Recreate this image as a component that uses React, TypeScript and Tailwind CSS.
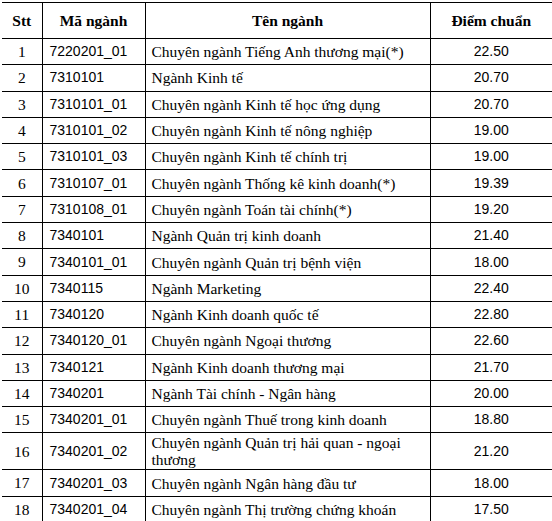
const rows: [string, string, string, string][] = [
  ['1', '7220201_01', 'Chuyên ngành Tiếng Anh thương mại(*)', '22.50'],
  ['2', '7310101', 'Ngành Kinh tế', '20.70'],
  ['3', '7310101_01', 'Chuyên ngành Kinh tế học ứng dụng', '20.70'],
  ['4', '7310101_02', 'Chuyên ngành Kinh tế nông nghiệp', '19.00'],
  ['5', '7310101_03', 'Chuyên ngành Kinh tế chính trị', '19.00'],
  ['6', '7310107_01', 'Chuyên ngành Thống kê kinh doanh(*)', '19.39'],
  ['7', '7310108_01', 'Chuyên ngành Toán tài chính(*)', '19.20'],
  ['8', '7340101', 'Ngành Quản trị kinh doanh', '21.40'],
  ['9', '7340101_01', 'Chuyên ngành Quản trị bệnh viện', '18.00'],
  ['10', '7340115', 'Ngành Marketing', '22.40'],
  ['11', '7340120', 'Ngành Kinh doanh quốc tế', '22.80'],
  ['12', '7340120_01', 'Chuyên ngành Ngoại thương', '22.60'],
  ['13', '7340121', 'Ngành Kinh doanh thương mại', '21.70'],
  ['14', '7340201', 'Ngành Tài chính - Ngân hàng', '20.00'],
  ['15', '7340201_01', 'Chuyên ngành Thuế trong kinh doanh', '18.80'],
  ['16', '7340201_02', 'Chuyên ngành Quản trị hải quan - ngoại thương', '21.20'],
  ['17', '7340201_03', 'Chuyên ngành Ngân hàng đầu tư', '18.00'],
  ['18', '7340201_04', 'Chuyên ngành Thị trường chứng khoán', '17.50'],
];

const serif = "font-['Liberation_Serif','Times_New_Roman',serif]";
const sans = "font-['Liberation_Sans',Arial,sans-serif]";

export default function App() {
  return (
    <div className="w-[552px] h-[521px] overflow-hidden bg-white text-black">
      <table className="ml-[2px] mt-[2px] w-[550px] table-fixed border-collapse">
        <colgroup>
          <col className="w-[40px]" />
          <col className="w-[103px]" />
          <col className="w-[285px]" />
          <col className="w-[122px]" />
        </colgroup>
        <thead>
          <tr className={`h-[36px] border-t border-b border-black text-[15.5px] font-bold ${serif}`}>
            <th className="text-center">Stt</th>
            <th className="border-l border-black text-center">Mã ngành</th>
            <th className="border-l border-black text-center">Tên ngành</th>
            <th className="border-l border-black text-center">Điểm chuẩn</th>
          </tr>
        </thead>
        <tbody>
          {rows.map(([stt, code, name, score]) => (
            <tr
              key={stt}
              className={`${stt === '16' ? 'h-[37px]' : 'h-[26.3px]'} border-b border-black`}
            >
              <td className={`text-center text-[15.5px] ${serif}`}>{stt}</td>
              <td className={`border-l border-black pl-[7px] text-[14px] ${sans}`}>{code}</td>
              <td className={`border-l border-black pl-[6px] pr-2 text-[15.5px] leading-[17px] ${serif}`}>{name}</td>
              <td className={`border-l border-black text-center text-[14px] ${sans}`}>{score}</td>
            </tr>
          ))}
        </tbody>
      </table>
    </div>
  );
}
